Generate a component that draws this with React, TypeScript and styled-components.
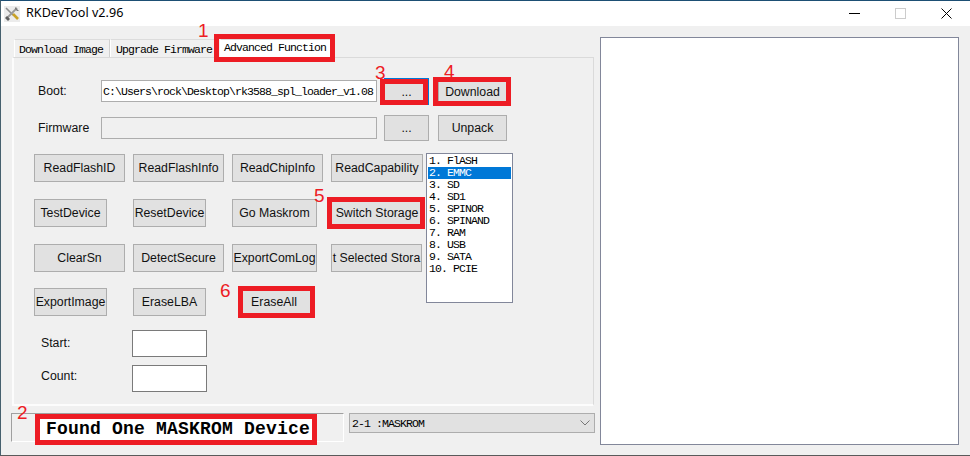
import styled, { createGlobalStyle } from 'styled-components'

const GlobalStyle = createGlobalStyle`
  html, body {
    margin: 0;
    padding: 0;
    background: #f0f0f0;
  }
  * {
    box-sizing: border-box;
  }
`

const uiFont = `'Liberation Sans', Arial, sans-serif`
const monoFont = `'Liberation Mono', 'Courier New', monospace`

const Window = styled.div`
  position: relative;
  width: 970px;
  height: 456px;
  overflow: hidden;
  background: #f0f0f0;
  border-top: 1px solid #1d4f74;
  border-bottom: 1px solid #5a5a5a;
  border-left: 1px solid #46606e;
  font-family: ${uiFont};
  font-size: 12.3px;
  color: #111;
`

const TitleBar = styled.div`
  display: flex;
  align-items: center;
  height: 25px;
  padding-left: 3px;
  background: #fff;
`

const TitleText = styled.span`
  margin: 0 0 2px 6px;
  font-family: 'Noto Sans', sans-serif;
  font-size: 12.6px;
  color: #000;
`

const Controls = styled.div`
  display: flex;
  align-items: center;
  margin-left: auto;
  gap: 35px;
  padding-right: 18px;
`

const Content = styled.div`
  display: flex;
  align-items: flex-start;
  padding-left: 11px;
`

const LeftColumn = styled.div`
  width: 583px;
  padding-top: 13px;
`

const TabStrip = styled.div`
  display: flex;
  height: 18px;
  padding-left: 2px;
`

const Tab = styled.div<{ $width: number; $pad: number; $active?: boolean; $frame?: string }>`
  position: relative;
  width: ${p => p.$width}px;
  padding: ${p => (p.$active ? 1 : 3)}px 0 0 ${p => p.$pad}px;
  font-family: ${monoFont};
  font-size: 11.5px;
  letter-spacing: -0.9px;
  white-space: nowrap;
  line-height: 13px;
  background: ${p => (p.$active ? '#fff' : '#f0f0f0')};
  border-top: 1px solid #dcdcdc;
  border-right: 1px solid #d0d0d0;
  border-left: 1px solid #fff;
  color: #000;

  ${p =>
    p.$active &&
    `
    margin-left: 5px;
    &::after {
      content: '';
      position: absolute;
      inset: ${p.$frame};
      border: 5px solid #ed1c24;
    }
  `}
`

const Panel = styled.div`
  width: 582px;
  height: 349px;
  padding: 20px 0 0 20px;
  background: #f0f0f0;
  border: 1px solid #dadada;
  border-bottom: 2px solid #fcfcfc;
  border-left: 2px solid #fcfcfc;
`

const FileRow = styled.div<{ $gapBelow: number }>`
  display: flex;
  align-items: flex-start;
  height: 27px;
  margin-bottom: ${p => p.$gapBelow}px;
`

const FieldLabel = styled.label<{ $width: number; $indent: number }>`
  width: ${p => p.$width}px;
  margin-top: 6px;
  padding-left: ${p => p.$indent}px;
  flex: none;
`

const PathInput = styled.input<{ $tone?: 'white' | 'grey' }>`
  width: 276px;
  height: 22px;
  margin-top: 2px;
  padding: 0 0 0 1px;
  flex: none;
  font-family: ${monoFont};
  font-size: 11.5px;
  letter-spacing: -0.9px;
  color: #000;
  background: ${p => (p.$tone === 'grey' ? '#f0f0f0' : '#fff')};
  border: 1px solid #adadad;
  outline: none;
`

const Button = styled.button<{
  $width?: number
  $height?: number
  $offset?: number
  $frame?: string
  $focus?: boolean
  $alignEnd?: boolean
  $padRight?: number
}>`
  position: relative;
  flex: none;
  display: block;
  width: ${p => p.$width ?? 91}px;
  height: ${p => p.$height ?? 28}px;
  margin-left: ${p => p.$offset ?? 0}px;
  padding: 0 ${p => p.$padRight ?? 0}px 0 0;
  align-self: ${p => (p.$alignEnd ? 'flex-end' : 'auto')};
  font-family: ${uiFont};
  font-size: 12.3px;
  white-space: nowrap;
  text-align: center;
  color: #111;
  background: #e1e1e1;
  border: 1px solid ${p => (p.$focus ? '#0078d7' : '#adadad')};

  ${p =>
    p.$frame &&
    `
    &::after {
      content: '';
      position: absolute;
      inset: ${p.$frame};
      border: 5px solid #ed1c24;
    }
  `}
`

const ActionArea = styled.div`
  display: flex;
  align-items: flex-start;
`

const ActionGrid = styled.div`
  display: grid;
  width: 392px;
  grid-template-columns: 99px 99px 99px 95px;
  grid-template-rows: 45px 45px 44px 28px;
`

const StorageList = styled.ul`
  width: 87px;
  height: 150px;
  margin: -1px 0 0 0;
  padding: 1px;
  list-style: none;
  background: #fff;
  border: 1px solid #82879a;
`

const StorageItem = styled.li<{ $selected?: boolean }>`
  height: 12px;
  padding-left: 1px;
  font-family: ${monoFont};
  font-size: 11.5px;
  letter-spacing: -0.9px;
  line-height: 12px;
  white-space: pre;
  color: ${p => (p.$selected ? '#fff' : '#000')};
  background: ${p => (p.$selected ? '#0078d7' : 'transparent')};
`

const RangeForm = styled.div`
  display: grid;
  grid-template-columns: 91px 75px;
  row-gap: 8px;
  align-items: center;
  margin-top: 14px;
  padding-left: 7px;
`

const RangeLabel = styled.label<{ $lift: number }>`
  margin-bottom: ${p => p.$lift * 2}px;
`

const RangeInput = styled.input`
  width: 75px;
  height: 27px;
  background: #fff;
  border: 1px solid #7a7a7a;
  outline: none;
`

const StatusRow = styled.div`
  display: flex;
  align-items: flex-start;
  margin-top: 7px;
`

const StatusBox = styled.div`
  width: 333px;
  height: 29px;
  margin-left: -1px;
  padding-left: 23px;
  border-top: 1px solid #a0a0a0;
  border-left: 1px solid #a0a0a0;
  border-bottom: 1px solid #fff;
  border-right: 1px solid #fff;
`

const StatusText = styled.div`
  width: 282px;
  height: 31px;
  padding-left: 6px;
  font-family: ${monoFont};
  font-size: 18px;
  font-weight: 700;
  letter-spacing: 0.2px;
  line-height: 21px;
  white-space: nowrap;
  color: #000;
  background: #fff;
  border: 5px solid #ed1c24;
`

const PortSelect = styled.div`
  display: flex;
  align-items: center;
  justify-content: space-between;
  width: 246px;
  height: 20px;
  margin-left: 5px;
  padding: 0 4px 0 2px;
  font-family: ${monoFont};
  font-size: 11.5px;
  letter-spacing: -0.9px;
  color: #000;
  background: #e1e1e1;
  border: 1px solid #adadad;
`

const OutputPanel = styled.div`
  width: 359px;
  height: 408px;
  margin: 11px 0 0 5px;
  background: #fff;
  border: 1px solid #82879a;
`

const Callout = styled.span<{ $x: number; $y: number }>`
  position: absolute;
  left: ${p => p.$x}px;
  top: ${p => p.$y}px;
  font-family: ${uiFont};
  font-size: 19px;
  line-height: 19px;
  color: #ed1c24;
`

const storages = ['1. FlASH', '2. EMMC', '3. SD', '4. SD1', '5. SPINOR', '6. SPINAND', '7. RAM', '8. USB', '9. SATA', '10. PCIE']

const callouts = [
  { n: 1, x: 197, y: 20 },
  { n: 2, x: 16, y: 402 },
  { n: 3, x: 374, y: 62 },
  { n: 4, x: 443, y: 61 },
  { n: 5, x: 313, y: 185 },
  { n: 6, x: 219, y: 280 },
]

function ToolsIcon() {
  return (
    <svg width="16" height="16" viewBox="0 0 16 16">
      <rect width="16" height="16" fill="#ececec" />
      <path d="M2 2 L9 9" stroke="#8d8d8d" strokeWidth="1.6" />
      <path d="M9 8 L14 13" stroke="#c9a227" strokeWidth="2.6" />
      <path d="M13 2 L3 12" stroke="#9a9a9a" strokeWidth="1.8" />
      <path d="M1 12 L4 15 L6 13 L3 10 Z" fill="#5f5f5f" />
      <path d="M11 1 L15 5 L13 5 L11 3 Z" fill="#7a7a7a" />
    </svg>
  )
}

function App() {
  return (
    <>
      <GlobalStyle />
      <Window>
        <TitleBar>
          <ToolsIcon />
          <TitleText>RKDevTool v2.96</TitleText>
          <Controls>
            <svg width="11" height="11" viewBox="0 0 11 11">
              <path d="M0 5.5 H11" stroke="#000" strokeWidth="1" />
            </svg>
            <svg width="11" height="11" viewBox="0 0 11 11">
              <rect x="0.5" y="0.5" width="10" height="10" fill="none" stroke="#ccc" />
            </svg>
            <svg width="11" height="11" viewBox="0 0 11 11">
              <path d="M0.5 0.5 L10.5 10.5 M10.5 0.5 L0.5 10.5" stroke="#000" strokeWidth="1" />
            </svg>
          </Controls>
        </TitleBar>
        <Content>
          <LeftColumn>
            <TabStrip>
              <Tab $width={96} $pad={4}>
                Download Image
              </Tab>
              <Tab $width={105} $pad={5}>
                Upgrade Firmware
              </Tab>
              <Tab $width={111} $pad={3} $active $frame="-6px -5px -5px -7px">
                Advanced Function
              </Tab>
            </TabStrip>
            <Panel>
              <FileRow $gapBelow={10}>
                <FieldLabel $width={67} $indent={4}>
                  Boot:
                </FieldLabel>
                <PathInput readOnly defaultValue="C:\Users\rock\Desktop\rk3588_spl_loader_v1.08" />
                <Button $width={45} $height={27} $offset={7} $focus $frame="0 0 -1px -5px">
                  ...
                </Button>
                <Button $width={69} $height={26} $offset={9} $alignEnd $frame="-3px -5px -2px -6px">
                  Download
                </Button>
              </FileRow>
              <FileRow $gapBelow={12}>
                <FieldLabel $width={67} $indent={4}>
                  Firmware
                </FieldLabel>
                <PathInput $tone="grey" readOnly />
                <Button $width={45} $height={26} $offset={7}>
                  ...
                </Button>
                <Button $width={69} $height={26} $offset={9}>
                  Unpack
                </Button>
              </FileRow>
              <ActionArea>
                <ActionGrid>
                  <Button>ReadFlashID</Button>
                  <Button>ReadFlashInfo</Button>
                  <Button>ReadChipInfo</Button>
                  <Button $width={92}>ReadCapability</Button>
                  <Button $width={73}>TestDevice</Button>
                  <Button $width={73}>ResetDevice</Button>
                  <Button $width={85}>Go Maskrom</Button>
                  <Button $width={92} $frame="-3px -3px -3px -5px">
                    Switch Storage
                  </Button>
                  <Button>ClearSn</Button>
                  <Button>DetectSecure</Button>
                  <Button $width={85}>ExportComLog</Button>
                  <Button $width={91}>t Selected Stora</Button>
                  <Button $width={73}>ExportImage</Button>
                  <Button $width={73}>EraseLBA</Button>
                  <Button $width={69} $offset={10} $padRight={5} $frame="-3px -5px -3px -5px">
                    EraseAll
                  </Button>
                </ActionGrid>
                <StorageList>
                  {storages.map((name, i) => (
                    <StorageItem key={name} $selected={i === 1}>
                      {name}
                    </StorageItem>
                  ))}
                </StorageList>
              </ActionArea>
              <RangeForm>
                <RangeLabel $lift={1}>Start:</RangeLabel>
                <RangeInput />
                <RangeLabel $lift={3}>Count:</RangeLabel>
                <RangeInput />
              </RangeForm>
            </Panel>
            <StatusRow>
              <StatusBox>
                <StatusText>Found One MASKROM Device</StatusText>
              </StatusBox>
              <PortSelect>
                2-1 :MASKROM
                <svg width="10" height="6" viewBox="0 0 10 6">
                  <path d="M0.5 0.5 L5 5 L9.5 0.5" fill="none" stroke="#777" strokeWidth="1" />
                </svg>
              </PortSelect>
            </StatusRow>
          </LeftColumn>
          <OutputPanel />
        </Content>
        {callouts.map(c => (
          <Callout key={c.n} $x={c.x} $y={c.y}>
            {c.n}
          </Callout>
        ))}
      </Window>
    </>
  )
}

export default App
